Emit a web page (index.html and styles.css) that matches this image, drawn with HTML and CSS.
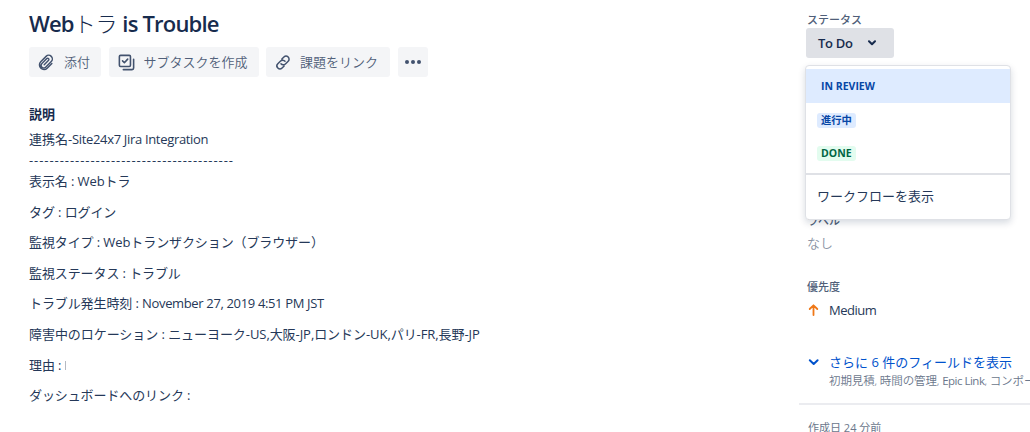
FILE: index.html
```html
<!DOCTYPE html>
<html lang="ja">
<head>
<meta charset="utf-8">
<title>Webトラ is Trouble</title>
<link rel="stylesheet" href="styles.css">
</head>
<body>
<div class="issue">
  <main class="main">
    <h1 class="title"><span class="title-strong">Web</span>トラ<span class="title-strong"> is Trouble</span></h1>
    <div class="toolbar">
      <button class="tool attach"><svg width="20" height="20" viewBox="0 0 20 20"><path d="M7.300 12.700l5.200-5.300a1.500 1.500 0 0 0-2.100-2.100L4.600 11.200a3.100 3.100 0 0 0 4.400 4.400l6.600-6.700a4.300 4.300 0 0 0-6.100-6.100L3.200 9.200a5.300 5.300 0 0 0 .2 7.600 5.300 5.300 0 0 0 7.400-.1l5.500-5.600"/></svg><span>添付</span></button>
      <button class="tool subtask"><svg width="24" height="24" viewBox="0 0 24 24"><rect x="3" y="3" width="14" height="14" rx="1.500"/><path d="M7 10l2.300 2.300 4.200-4.600M21 8v11a2 2 0 0 1-2 2H8"/></svg><span>サブタスクを作成</span></button>
      <button class="tool link"><svg width="24" height="24" viewBox="0 0 24 24"><path d="M10.500 7.400l2.700-2.700a4 4 0 0 1 5.700 5.700L15.200 14a4 4 0 0 1-5.900-.3M13.500 16.600l-2.700 2.700a4 4 0 0 1-5.700-5.700L8.800 10a4 4 0 0 1 5.900.3"/></svg><span>課題をリンク</span></button>
      <button class="tool more" aria-label="その他"><i></i><i></i><i></i></button>
    </div>
    <h2 class="heading">説明</h2>
    <div class="intro">連携名<span class="en site">-Site24x7 Jira Integration</span></div>
    <div class="dashes">----------------------------------------</div>
    <div class="desc">
      <p>表示名 : Webトラ</p>
      <p>タグ : ログイン</p>
      <p>監視タイプ : Webトランザクション（ブラウザー）</p>
      <p>監視ステータス : トラブル</p>
      <p class="time">トラブル発生時刻 : <span class="en">November 27, 2019 4:51 PM JST</span></p>
      <p class="places">障害中のロケーション : ニューヨーク-US,大阪-JP,ロンドン-UK,パリ-FR,長野-JP</p>
      <p>理由 : <span class="caret"></span></p>
      <p>ダッシュボードへのリンク :</p>
    </div>
  </main>
  <aside class="side">
    <div class="label">ステータス</div>
    <div class="status">
      <button class="status-button">To Do<svg width="10" height="6" viewBox="0 0 10 6"><path d="M2 1.300l3 3 3-3"/></svg></button>
      <div class="menu">
        <div class="option selected"><span class="lozenge blue">IN REVIEW</span></div>
        <div class="option"><span class="lozenge blue cjk">進行中</span></div>
        <div class="option"><span class="lozenge green">DONE</span></div>
        <div class="workflow">ワークフローを表示</div>
      </div>
    </div>
    <div class="label tags">ラベル</div>
    <div class="none">なし</div>
    <div class="label priority-label">優先度</div>
    <div class="priority"><svg width="14" height="14" viewBox="0 0 14 14"><path d="M6.500 12V2.500M2.700 6l3.800-3.700L10.300 6"/></svg><span>Medium</span></div>
    <div class="fields">
      <svg width="14" height="14" viewBox="0 0 14 14"><path d="M2.800 5.300L6.700 9l3.900-3.700"/></svg>
      <div><div class="show">さらに 6 件のフィールドを表示</div><div class="names">初期見積, 時間の管理, <span class="epic">Epic Link</span>, コンポーネント</div></div>
    </div>
    <div class="created">作成日 24 分前</div>
  </aside>
</div>
</body>
</html>
```

FILE: styles.css
```css
* { box-sizing: border-box; }
body {
  margin: 0;
  width: 1030px;
  height: 432px;
  overflow: hidden;
  background: #fff;
  color: #253858;
  font: 13px/20px "Open Sans", "Noto Sans CJK JP", sans-serif;
}
p, h1, h2 { margin: 0; }
button { border: 0; font: inherit; color: inherit; padding: 0; }
svg { fill: none; stroke: currentColor; stroke-width: 2; stroke-linecap: round; stroke-linejoin: round; flex: none; }
.issue { display: flex; height: 432px; white-space: nowrap; }
.main { width: 799px; padding: 8px 0 0 29px; flex: none; }
.title { height: 30px; line-height: 30px; font-size: 22px; font-weight: 300; color: #172b4d; letter-spacing: -0.2px; }
.title-strong { font-weight: 600; letter-spacing: -0.8px; }
.toolbar { display: flex; gap: 8px; margin-top: 9px; height: 30px; }
.tool { display: flex; align-items: center; background: #f4f5f7; border-radius: 3px; color: #505f79; padding-left: 8px; }
.tool svg { width: 19px; height: 19px; margin-right: 8px; color: #42526e; }
.tool span { font-size: 13px; line-height: 20px; padding-bottom: 1px; font-weight: 350; }
.attach { width: 72px; }
.attach svg { width: 17px; height: 17px; margin: 0 9px 0 1px; stroke-width: 1.700; }
.subtask { width: 150px; }
.link { width: 124px; }
.link svg { width: 18px; }
.toolbar .subtask, .toolbar .link { margin-left: -0.5px; }
.more { width: 30px; padding: 0; justify-content: center; gap: 2px; }
.more i { width: 4px; height: 4px; border-radius: 50%; background: #42526e; }
.heading { margin-top: 27px; font-size: 13px; line-height: 20px; font-weight: 700; color: #172b4d; }
.intro { margin-top: 5px; }
.en { letter-spacing: -0.35px; }
.site { letter-spacing: -0.32px; }
.dashes { height: 20px; margin-top: 1px; letter-spacing: 0.94px; }
.desc { display: grid; grid-auto-rows: 30.6px; padding-top: 1px; letter-spacing: -0.1px; }
.places { letter-spacing: -0.06px; }
.caret { display: inline-block; width: 1px; height: 9px; background: #b5b9c2; }
.side { width: 231px; flex: none; color: #253858; }
.label { margin-left: 8px; font-size: 11px; line-height: 16px; color: #505f79; font-weight: 500; }
.side > .label:first-child { margin-top: 12px; }
.status { position: relative; margin-left: 7px; height: 30px; }
.status-button { display: flex; align-items: center; justify-content: space-between; width: 88px; height: 30px; padding: 0 17px 0 12px; background: #dfe1e6; border-radius: 3px; color: #172b4d; font-weight: 600; letter-spacing: -0.3px; }
.menu { position: absolute; top: 37px; left: -1px; width: 206px; height: 155px; padding-top: 3px; background: #fff; border: 1px solid #dfe1e6; border-radius: 4px; box-shadow: 0 3px 7px rgba(9,30,66,.16); }
.option { height: 33.500px; padding: 2px 0 0 11px; display: flex; align-items: center; }
.selected { background: #deebff; }
.lozenge { height: 15px; padding: 0 4px; border-radius: 3px; font-size: 10.500px; line-height: 15px; font-weight: 700; }
.cjk { font-size: 10.300px; }
.blue { color: #0747a6; background: #deebff; }
.green { color: #006644; background: #e3fcef; }
.workflow { margin-top: 3px; border-top: 2px solid #dfe1e6; height: 45px; padding-left: 11px; line-height: 43px; }
.tags { margin-top: 155px; }
.none { margin: 4px 0 0 8px; color: #8993a4; font-weight: 350; }
.priority-label { margin-top: 26px; }
.priority { display: flex; align-items: center; gap: 8px; margin: 5px 0 0 8px; letter-spacing: -0.5px; }
.priority svg { color: #ef7818; stroke-width: 1.800; }
.fields { display: flex; gap: 8px; margin: 32px 0 0 8px; height: 51px; }
.fields svg { margin-top: 3px; color: #0052cc; }
.show { color: #0052cc; line-height: 20px; }
.names { font-size: 11.500px; line-height: 17px; color: #6b778c; font-weight: 350; letter-spacing: -0.1px; }
.epic { font-weight: 400; letter-spacing: -0.5px; }
.created { border-top: 2px solid #ebecf0; padding: 14px 0 0 9px; font-size: 11px; line-height: 17px; color: #6b778c; }
```
